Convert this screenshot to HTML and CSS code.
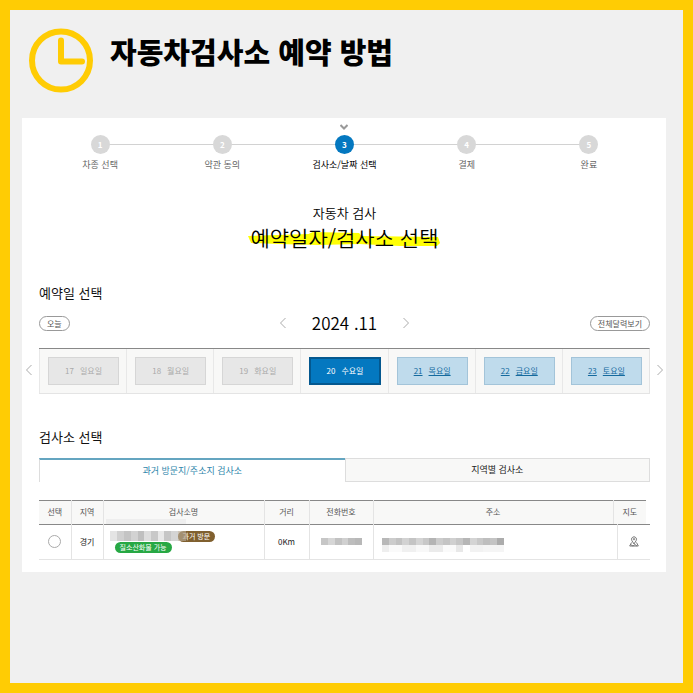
FILE: index.html
```
<!DOCTYPE html>
<html lang="ko">

<head>
    <meta charset="UTF-8">
    <meta name="viewport" content="width=device-width, initial-scale=1.0">
    <title>자동차검사소 예약 방법</title>
    <link rel="stylesheet" href="styles.css">
</head>

<body>

    <header class="guide-header">
        <svg class="clock" viewBox="0 0 64 64" aria-hidden="true">
            <circle cx="32" cy="32" r="29" />
            <path d="M32 12v21h21" />
        </svg>
        <h1>자동차검사소 예약 방법</h1>
    </header>

    <main class="panel">
        <ol class="steps">
            <li><span class="num">1</span>차종 선택</li>
            <li><span class="num">2</span>약관 동의</li>
            <li class="active">
                <svg class="check" viewBox="0 0 8 6" aria-hidden="true"><path d="M.5 1L4 4.500 7.500 1" /></svg>
                <span class="num">3</span>검사소/날짜 선택
            </li>
            <li><span class="num">4</span>결제</li>
            <li><span class="num">5</span>완료</li>
        </ol>

        <div class="page-title">
            <p>자동차 검사</p>
            <h2>
                <svg class="marker" viewBox="0 0 190 16" preserveAspectRatio="none" aria-hidden="true">
                    <path d="M0 5L60 3 64 1 110 2 112 5 188 6 190 12 187 15 150 15 110 13 70 14 30 13 3 12Z" />
                </svg>
                예약일자/검사소 선택
            </h2>
        </div>

        <section>
            <h3>예약일 선택</h3>
            <div class="month-bar">
                <button type="button" class="pill">오늘</button>
                <div class="month">
                    <button type="button" class="arrow" aria-label="이전 달"><svg viewBox="0 0 6 12"><path d="M5.500 1L.5 6l5 5" /></svg></button>
                    <strong>2024 .11</strong>
                    <button type="button" class="arrow" aria-label="다음 달"><svg viewBox="0 0 6 12"><path d="M.5 1l5 5-5 5" /></svg></button>
                </div>
                <button type="button" class="pill">전체달력보기</button>
            </div>

            <div class="week">
                <button type="button" class="arrow prev" aria-label="이전 주"><svg viewBox="0 0 6 12"><path d="M5.500 1L.5 6l5 5" /></svg></button>
                <ul class="days">
                    <li><button type="button" disabled><span>17</span><span>일요일</span></button></li>
                    <li><button type="button" disabled><span>18</span><span>월요일</span></button></li>
                    <li><button type="button" disabled><span>19</span><span>화요일</span></button></li>
                    <li><button type="button" class="selected"><span>20</span><span>수요일</span></button></li>
                    <li><button type="button"><span>21</span><span>목요일</span></button></li>
                    <li><button type="button"><span>22</span><span>금요일</span></button></li>
                    <li><button type="button"><span>23</span><span>토요일</span></button></li>
                </ul>
                <button type="button" class="arrow next" aria-label="다음 주"><svg viewBox="0 0 6 12"><path d="M.5 1l5 5-5 5" /></svg></button>
            </div>
        </section>

        <section class="centers">
            <h3>검사소 선택</h3>
            <div class="tabs">
                <button type="button" class="on">과거 방문지/주소지 검사소</button>
                <button type="button">지역별 검사소</button>
            </div>

            <table>
                <thead>
                    <tr>
                        <th class="c-pick">선택</th>
                        <th class="c-area">지역</th>
                        <th class="c-name">검사소명</th>
                        <th class="c-dist">거리</th>
                        <th class="c-tel">전화번호</th>
                        <th>주소</th>
                        <th class="c-map">지도</th>
                    </tr>
                </thead>
                <tbody>
                    <tr>
                        <td class="c-pick"><input type="radio" name="center" aria-label="경기 검사소 선택"></td>
                        <td class="c-area">경기</td>
                        <td class="c-name">
                            <span class="smudge"></span>
                            <div class="name-line">
                                <span class="mosaic name"></span>
                                <span class="badge visited">과거 방문</span>
                            </div>
                            <span class="badge nox">질소산화물 가능</span>
                        </td>
                        <td class="c-dist">0Km</td>
                        <td class="c-tel"><span class="mosaic tel"></span></td>
                        <td>
                            <span class="mosaic addr"></span>
                            <span class="mosaic addr-sub"></span>
                        </td>
                        <td class="c-map">
                            <svg class="map-icon" viewBox="0 0 10 11" aria-label="지도">
                                <path d="M5 8L2.800 4.500a2.500 2.500 0 1 1 4.400 0z" />
                                <circle cx="5" cy="3.200" r=".7" />
                                <path d="M2.500 6.500L.7 10h8.600L7.500 6.500M1.500 8.500L4 10l2-1.500L8 10" />
                            </svg>
                        </td>
                    </tr>
                </tbody>
            </table>
        </section>
    </main>

</body>

</html>
```
FILE: styles.css
```
* {
    box-sizing: border-box;
}

body {
    margin: 0;
    min-height: 100vh;
    border: 10px solid #ffcc04;
    background: #f0f0f0;
    color: #222;
    font-family: 'Noto Sans CJK KR', sans-serif;
    font-size: 9px;
    line-height: 12px;
}

h1,
h2,
h3,
p,
ol,
ul {
    margin: 0;
    padding: 0;
    list-style: none;
}

button {
    margin: 0;
    padding: 0;
    border: 0;
    background: none;
    font: inherit;
    color: inherit;
    cursor: pointer;
}

svg {
    display: block;
    fill: none;
}
/* Header */

.guide-header {
    display: flex;
    align-items: flex-start;
    gap: 17px;
    padding: 18px 19px 25px;
}

.clock {
    width: 64px;
    height: 65px;
    stroke: #ffcc04;
    stroke-width: 6;
    stroke-linecap: round;
    stroke-linejoin: round;
}

.guide-header h1 {
    font-size: 29px;
    font-weight: 900;
    line-height: 46px;
    color: #000;
}

.panel {
    margin: 0 17px 0 12px;
    padding: 17px 16px 12px 17px;
    background: #fff;
}
/* Steps */

.steps {
    display: grid;
    grid-template-columns: repeat(5, 1fr);
    color: #666;
    text-align: center;
}

.steps li {
    position: relative;
}

.steps li + li::before {
    content: '';
    position: absolute;
    top: 9px;
    right: 50%;
    width: 100%;
    height: 1px;
    background: #d2d2d2;
}

.num {
    position: relative;
    z-index: 1;
    display: block;
    width: 19px;
    margin: 0 auto 5px;
    border-radius: 50%;
    background: #d8d8d8;
    color: #fff;
    font-size: 8px;
    font-weight: 700;
    line-height: 19px;
}

.steps .active {
    color: #000;
}

.active .num {
    background: #0478c0;
}

.check {
    position: absolute;
    top: -11px;
    left: calc(50% - 4px);
    width: 8px;
    height: 6px;
    stroke: #999;
    stroke-width: 2;
}
/* Title */

.page-title {
    margin-top: 33px;
    text-align: center;
    color: #000;
}

.page-title p {
    font-size: 13px;
    font-weight: 350;
    line-height: 18px;
}

.page-title h2 {
    position: relative;
    z-index: 0;
    display: inline-block;
    padding: 0 2px;
    font-size: 21px;
    font-weight: 350;
    line-height: 30px;
}

.marker {
    position: absolute;
    z-index: -1;
    left: 0;
    bottom: 5px;
    width: 100%;
    height: 16px;
    fill: #ffff04;
}

h3 {
    font-size: 13px;
    font-weight: 400;
    line-height: 20px;
    color: #111;
}

section {
    margin-top: 31px;
}
/* Month */

.month-bar {
    display: grid;
    grid-template-columns: 1fr auto 1fr;
    align-items: center;
    margin-top: 10px;
}

.pill {
    justify-self: start;
    height: 15px;
    padding: 0 7px;
    border: 1px solid #999;
    border-radius: 8px;
    color: #555;
    font-size: 8px;
    line-height: 13px;
}

.pill:last-child {
    justify-self: end;
}

.month {
    display: flex;
    align-items: center;
    gap: 26px;
}

.month strong {
    font-size: 17px;
    font-weight: 350;
    line-height: 20px;
    color: #000;
}

.arrow svg {
    width: 6px;
    height: 12px;
    stroke: #aaa;
}
/* Week */

.week {
    position: relative;
    margin-top: 15px;
}

.prev,
.next {
    position: absolute;
    top: 16px;
}

.prev {
    left: -13px;
}

.next {
    right: -13px;
}

.days {
    display: grid;
    grid-template-columns: repeat(7, 1fr);
    border-top: 1px solid #888;
    border-right: 1px solid #e4e4e4;
    border-bottom: 1px solid #e4e4e4;
    background: #f8f8f7;
}

.days li {
    padding: 8px 7px 8px 8px;
    border-left: 1px solid #e8e8e8;
}

.days button {
    display: flex;
    justify-content: center;
    align-items: center;
    gap: 6px;
    width: 100%;
    height: 28px;
    border: 1px solid #a3c4d9;
    background: #bfdbec;
    color: #146a9e;
    font-size: 8px;
    text-decoration: underline;
}

.days button:disabled {
    border-color: #d6d6d6;
    background: #e7e7e7;
    color: #aaa;
    text-decoration: none;
}

.days .selected {
    border: 2px solid #04588f;
    background: #0478c0;
    color: #fff;
    text-decoration: none;
}
/* Inspection centers */

.centers {
    margin-top: 33px;
}

.tabs {
    display: grid;
    grid-template-columns: 1fr 1fr;
    margin-top: 11px;
}

.tabs button {
    height: 24px;
    border: 1px solid #ddd;
    background: #f8f8f7;
}

.tabs .on {
    border-top: 2px solid #64a5c0;
    border-right: 0;
    border-bottom: 0;
    background: #fff;
    color: #2f86ab;
}

table {
    display: block;
    margin-top: 18px;
    text-align: center;
}

thead,
tbody {
    display: table;
    width: 100%;
    table-layout: fixed;
    border-collapse: collapse;
}

thead {
    width: calc(100% - 4px);
    border-top: 1px solid #888;
    background: #f8f8f7;
    color: #555;
    font-size: 8px;
}

tbody {
    border-top: 1px solid #888;
    border-bottom: 1px solid #e4e4e4;
    font-size: 8px;
}

th,
td {
    padding: 0;
    font-weight: 400;
}

th {
    height: 23px;
}

td {
    height: 35px;
}

th + th,
td + td {
    border-left: 1px solid #e4e4e4;
}

.c-pick,
.c-area {
    width: 32px;
}

.c-name {
    position: relative;
    width: 161px;
}

.c-dist {
    width: 45px;
}

.c-tel {
    width: 64px;
}

.c-map {
    width: 33px;
}

td.c-name {
    padding-left: 6px;
    text-align: left;
}

input[type='radio'] {
    display: block;
    appearance: none;
    width: 13px;
    height: 13px;
    margin: 0 auto;
    border: 1px solid #aaa;
    border-radius: 50%;
}

.badge {
    display: block;
    width: fit-content;
    height: 11px;
    padding: 0 5px;
    border-radius: 6px;
    color: #fff;
    font-size: 7px;
    line-height: 11px;
}

.name-line {
    display: flex;
}

.visited {
    margin-left: -8px;
    background: #80602f;
}

.nox {
    margin-left: 5px;
    background: #27a844;
}

.smudge {
    position: absolute;
    top: -6px;
    left: 2px;
    width: 80px;
    height: 5px;
    background: #eee;
}
/* Hidden personal data */

.mosaic {
    display: block;
    height: 7px;
}

.name {
    position: relative;
    width: 76px;
    height: 10px;
    background: linear-gradient(90deg, #e4e4e4 7px, #d0d0d0 7px 14px, #c4c4c4 14px 21px, #d2d2d2 21px 28px, #bfbfbf 28px 34px, #ddd 34px 41px, #c8c8c8 41px 48px, #e8e8e8 48px 54px, #c6c6c6 54px 61px, #d4d4d4 61px 68px, #b5a894aa 68px);
}

.tel {
    width: 41px;
    margin: 0 auto;
    background: linear-gradient(90deg, #c6c6c6 7px, #d6d6d6 7px 14px, #c2c2c2 14px 21px, #d0d0d0 21px 27px, #bdbdbd 27px 34px, #b8b8b8 34px);
}

.addr,
.addr-sub {
    width: 122px;
    margin-left: 8px;
}

.addr {
    margin-top: 6px;
    background: linear-gradient(90deg, #b8b8b8 7px, #ccc 7px 14px, #c2c2c2 14px 20px, #d2d2d2 20px 27px, #c4c4c4 27px 34px, #d4d4d4 34px 41px, #c8c8c8 41px 47px, #b4b4b4 47px 54px, #ccc 54px 61px, #c4c4c4 61px 68px, #d0d0d0 68px 74px, #c6c6c6 74px 81px, #b6b6b6 81px 88px, #d4d4d4 88px 95px, #c8c8c8 95px 101px, #bebebe 101px 108px, #c4c4c4 108px 115px, #acacac 115px);
}

.addr-sub {
    background: linear-gradient(90deg, #eee 7px, #fafafa 7px 20px, #f0f0f0 20px 34px, #f8f8f8 34px 47px, #ebebeb 47px 61px, #fafafa 61px 74px, #e8e8e8 74px 81px, #fff 81px 88px, #f2f2f2 88px 101px, #f5f5f5 101px);
}

.map-icon {
    width: 10px;
    height: 11px;
    margin: 0 auto;
    stroke: #777;
}
```
